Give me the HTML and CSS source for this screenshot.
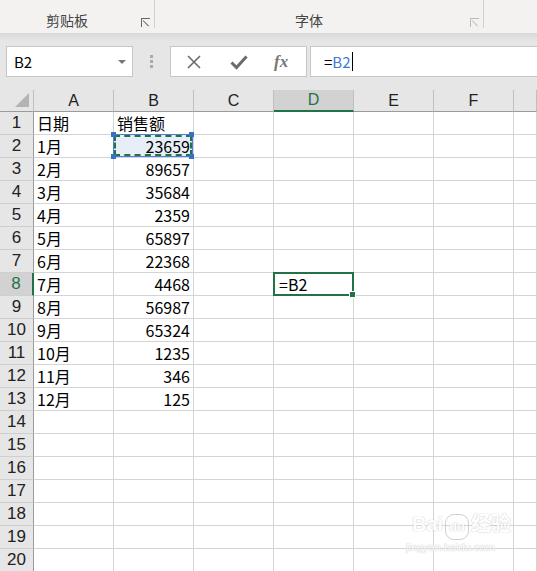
FILE: index.html
```html
<!DOCTYPE html>
<html lang="zh-CN">
<head>
    <meta charset="UTF-8">
    <title>销售额 - Excel</title>
    <link rel="stylesheet" href="styles.css">
</head>
<body>
    <div class="ribbon">
        <div class="group group-clip">
            <span class="group-label">剪贴板</span>
            <span class="launcher"></span>
        </div>
        <div class="group group-font">
            <span class="group-label">字体</span>
            <span class="launcher faded"></span>
        </div>
    </div>
    <div class="ribbon-shadow"></div>

    <div class="formula-row">
        <div class="name-box">
            <span>B2</span>
            <span class="caret-down"></span>
        </div>
        <div class="grip"><i></i><i></i><i></i></div>
        <div class="fx-buttons">
            <svg class="fx-icon" width="16" height="16" viewBox="0 0 16 16">
                <path d="M2 2 L14 14 M14 2 L2 14" stroke="#6b6b6b" stroke-width="1.6" fill="none"/>
            </svg>
            <svg class="fx-icon" width="18" height="16" viewBox="0 0 18 16">
                <path d="M1.5 8.5 L6.5 13.5 L16.5 2.5" stroke="#6b6b6b" stroke-width="3" fill="none"/>
            </svg>
            <span class="fx-label">fx</span>
        </div>
        <div class="formula-input">
            <span class="eq">=</span><span class="ref">B2</span><span class="text-cursor"></span>
        </div>
    </div>

    <div class="sheet" id="sheet"></div>

    <div class="watermark">
        <div class="wm-logo">Bai<span class="wm-paw">du</span>经验</div>
        <div class="wm-url">jingyan.baidu.com</div>
    </div>

    <script>
        // 表格数据
        const rows = [
            ['日期', '销售额'],
            ['1月', 23659],
            ['2月', 89657],
            ['3月', 35684],
            ['4月', 2359],
            ['5月', 65897],
            ['6月', 22368],
            ['7月', 4468],
            ['8月', 56987],
            ['9月', 65324],
            ['10月', 1235],
            ['11月', 346],
            ['12月', 125]
        ];
        const cols = ['A', 'B', 'C', 'D', 'E', 'F', 'G'];
        const sheet = document.getElementById('sheet');

        function addCell(cls, text) {
            const cell = document.createElement('div');
            cell.className = cls;
            if (text !== undefined) cell.textContent = text;
            sheet.appendChild(cell);
            return cell;
        }

        // 列标题
        addCell('corner').innerHTML = '<span class="corner-tri"></span>';
        cols.forEach(c => addCell(c === 'D' ? 'col-head active' : 'col-head', c === 'G' ? '' : c));

        for (let r = 1; r <= 20; r++) {
            addCell(r === 8 ? 'row-head active' : 'row-head', r);
            const data = rows[r - 1] || [];
            cols.forEach((c, i) => {
                let cls = 'cell';
                let val = data[i];
                if (typeof val === 'number') cls += ' num';
                if (c === 'B' && r === 2) cls += ' copy-src';
                if (c === 'D' && r === 8) { cls += ' editing'; val = '=B2'; }
                addCell(cls, val);
            });
        }
    </script>
</body>
</html>
```

FILE: styles.css
```css
* {
    margin: 0;
    padding: 0;
    box-sizing: border-box;
}

body {
    width: 537px;
    height: 571px;
    overflow: hidden;
    position: relative;
    background: #e6e6e6;
    font-family: "Noto Sans CJK SC", "Liberation Sans", sans-serif;
    color: #000;
}

/* ribbon */
.ribbon {
    height: 33px;
    background: #f3f2f1;
    display: flex;
}

.group {
    position: relative;
    height: 28px;
    border-right: 1px solid #d2d0ce;
    display: flex;
    align-items: flex-end;
    justify-content: center;
    padding-right: 20px;
}

.group-clip {
    width: 155px;
}

.group-font {
    width: 329px;
}

.group-label {
    font-size: 14px;
    line-height: 18px;
    color: #444;
    margin-bottom: -1px;
}

.launcher {
    position: absolute;
    right: 4px;
    bottom: 1px;
    width: 9px;
    height: 9px;
    border-left: 1px solid #666;
    border-top: 1px solid #666;
}

.launcher::after {
    content: "";
    position: absolute;
    left: 1px;
    top: 1px;
    width: 8px;
    height: 1px;
    background: #666;
    transform-origin: left;
    transform: rotate(45deg);
}

.launcher.faded {
    border-color: #bbb;
}

.launcher.faded::after {
    background: #bbb;
}

.ribbon-shadow {
    height: 8px;
    background: linear-gradient(#d9d9d9, #e6e6e6);
}

/* formula bar */
.formula-row {
    height: 49px;
    padding: 5px 0 0 6px;
    display: flex;
    align-items: flex-start;
}

.name-box {
    width: 127px;
    height: 31px;
    background: #fff;
    border: 1px solid #c6c6c6;
    display: flex;
    align-items: center;
    justify-content: space-between;
    padding: 0 6px 0 7px;
    font-size: 15px;
}

.caret-down {
    width: 0;
    height: 0;
    border-left: 4px solid transparent;
    border-right: 4px solid transparent;
    border-top: 4px solid #777;
}

.grip {
    width: 37px;
    height: 31px;
    display: flex;
    flex-direction: column;
    align-items: center;
    justify-content: center;
    gap: 2px;
}

.grip i {
    width: 3px;
    height: 3px;
    background: #aaa;
}

.fx-buttons {
    width: 137px;
    height: 31px;
    background: #fff;
    border: 1px solid #c6c6c6;
    display: flex;
    align-items: center;
    padding-left: 15px;
    gap: 28px;
}

.fx-label {
    font-family: "Liberation Serif", serif;
    font-style: italic;
    font-weight: bold;
    font-size: 17px;
    color: #777;
    margin-left: -2px;
}

.formula-input {
    flex: 1;
    margin-left: 3px;
    height: 31px;
    background: #fff;
    border: 1px solid #c6c6c6;
    border-right: none;
    display: flex;
    align-items: center;
    padding-left: 13px;
    font-size: 15px;
}

.ref {
    color: #3a7bd5;
}

.text-cursor {
    width: 1px;
    height: 19px;
    background: #000;
    margin-left: 1px;
}

/* sheet */
.sheet {
    display: grid;
    grid-template-columns: 34px repeat(6, 80px) 1fr;
    grid-template-rows: 22px repeat(20, 23px);
    background: #fff;
    font-size: 16px;
}

.corner,
.col-head,
.row-head {
    background: #e6e6e6;
    color: #222;
}

.corner {
    position: relative;
    border-right: 1px solid #bfbfbf;
    border-bottom: 1px solid #9b9b9b;
}

.corner-tri {
    position: absolute;
    right: 4px;
    bottom: 4px;
    width: 0;
    height: 0;
    border-left: 14px solid transparent;
    border-bottom: 14px solid #b4b4b4;
}

.col-head {
    border-right: 1px solid #bfbfbf;
    border-bottom: 1px solid #9b9b9b;
    display: flex;
    align-items: center;
    justify-content: center;
    font-family: "Liberation Sans", sans-serif;
    font-size: 16px;
}

.row-head {
    border-right: 1px solid #9b9b9b;
    border-bottom: 1px solid #cfcfcf;
    display: flex;
    align-items: center;
    justify-content: center;
    font-family: "Liberation Sans", sans-serif;
    font-size: 17px;
}

.col-head.active {
    background: #d2d2d2;
    color: #217346;
    border-bottom: 2px solid #217346;
}

.row-head.active {
    background: #d2d2d2;
    color: #217346;
    border-right: 2px solid #217346;
}

.cell {
    border-right: 1px solid #d4d4d4;
    border-bottom: 1px solid #d4d4d4;
    padding: 0 3px;
    line-height: 22px;
    white-space: nowrap;
    overflow: hidden;
}

.cell.num {
    text-align: right;
}

.copy-src {
    position: relative;
    overflow: visible;
    background: #e8eef8;
}

.copy-src::before {
    content: "";
    position: absolute;
    left: 0;
    top: 0;
    right: 1px;
    bottom: 1px;
    border: 2px dashed #217346;
    outline: 1px solid #4f7fd0;
}

.copy-src::after {
    content: "";
    position: absolute;
    left: -3px;
    top: -3px;
    width: 5px;
    height: 5px;
    background: #3a6fc8;
    box-shadow: 78px 0 #3a6fc8, 0 22px #3a6fc8, 78px 22px #3a6fc8;
}

.editing {
    position: relative;
    overflow: visible;
    border: 2px solid #217346;
    margin: -1px 0 0 -1px;
    padding-left: 4px;
    line-height: 21px;
}

.editing::after {
    content: "";
    position: absolute;
    right: -4px;
    bottom: -4px;
    width: 5px;
    height: 5px;
    background: #217346;
    border: 1px solid #fff;
}

/* watermark */
.watermark {
    position: absolute;
    left: 412px;
    top: 512px;
    color: #fff;
    text-shadow: 0 0 1px #c8c8c8, 0 0 1px #c8c8c8;
    font-family: "Liberation Sans", "Noto Sans CJK SC", sans-serif;
    opacity: 0.9;
}

.wm-logo {
    font-size: 20px;
    font-weight: bold;
    line-height: 24px;
    white-space: nowrap;
}

.wm-paw {
    display: inline-block;
    font-size: 13px;
    padding: 0 3px;
    border: 1px solid #ccc;
    border-radius: 9px;
    margin: 0 2px;
}

.wm-url {
    font-size: 11px;
    margin-left: -6px;
    line-height: 14px;
}
```
